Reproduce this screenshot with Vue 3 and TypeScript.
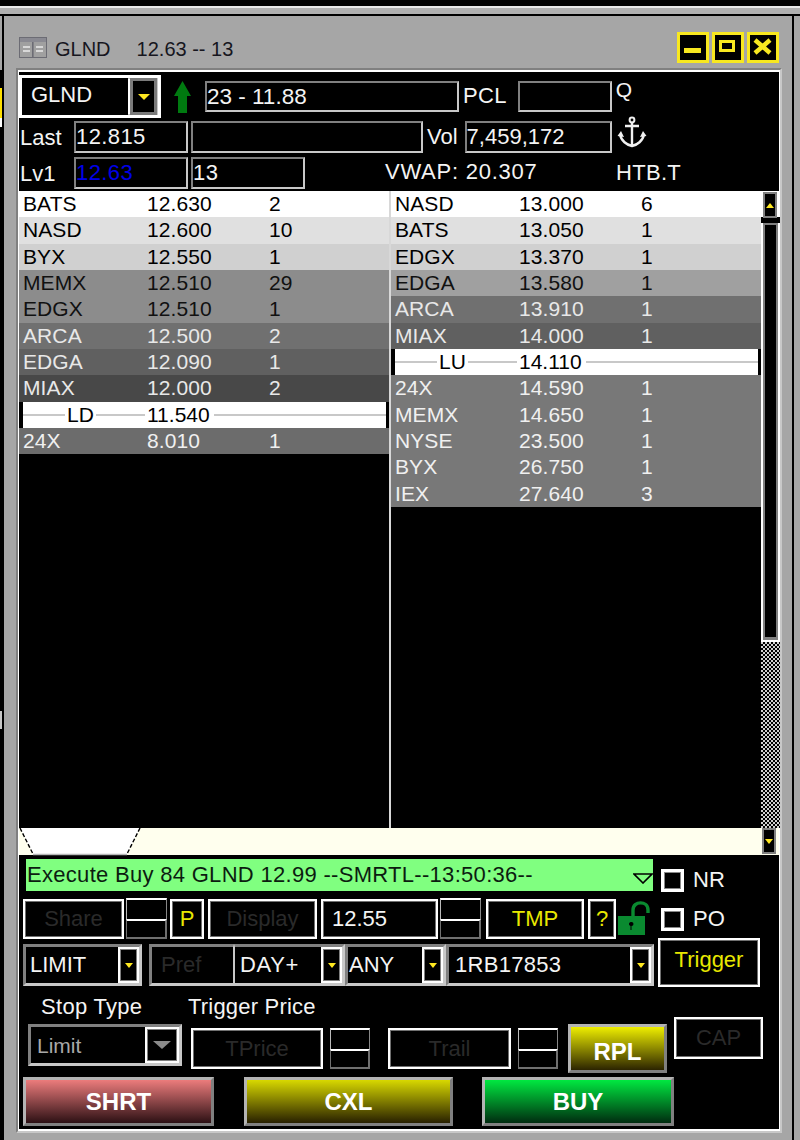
<script setup lang="ts">
interface Row { n?: string; p: string; s?: string; bg: string; fg: string; limit?: string }
const W = '#ffffff'
const leftRows: Row[] = [
  { n: 'BATS', p: '12.630', s: '2', bg: W, fg: '#000' },
  { n: 'NASD', p: '12.600', s: '10', bg: '#e0e0e0', fg: '#000' },
  { n: 'BYX', p: '12.550', s: '1', bg: '#d0d0d0', fg: '#000' },
  { n: 'MEMX', p: '12.510', s: '29', bg: '#8c8c8c', fg: '#111' },
  { n: 'EDGX', p: '12.510', s: '1', bg: '#8c8c8c', fg: '#111' },
  { n: 'ARCA', p: '12.500', s: '2', bg: '#707070', fg: '#e8e8e8' },
  { n: 'EDGA', p: '12.090', s: '1', bg: '#606060', fg: '#e8e8e8' },
  { n: 'MIAX', p: '12.000', s: '2', bg: '#484848', fg: '#e8e8e8' },
  { limit: 'LD', p: '11.540', bg: W, fg: '#000' },
  { n: '24X', p: '8.010', s: '1', bg: '#6c6c6c', fg: '#f0f0f0' },
]
const rightRows: Row[] = [
  { n: 'NASD', p: '13.000', s: '6', bg: W, fg: '#000' },
  { n: 'BATS', p: '13.050', s: '1', bg: '#e0e0e0', fg: '#000' },
  { n: 'EDGX', p: '13.370', s: '1', bg: '#d0d0d0', fg: '#000' },
  { n: 'EDGA', p: '13.580', s: '1', bg: '#a0a0a0', fg: '#111' },
  { n: 'ARCA', p: '13.910', s: '1', bg: '#707070', fg: '#e8e8e8' },
  { n: 'MIAX', p: '14.000', s: '1', bg: '#606060', fg: '#e8e8e8' },
  { limit: 'LU', p: '14.110', bg: W, fg: '#000' },
  { n: '24X', p: '14.590', s: '1', bg: '#787878', fg: '#f0f0f0' },
  { n: 'MEMX', p: '14.650', s: '1', bg: '#787878', fg: '#f0f0f0' },
  { n: 'NYSE', p: '23.500', s: '1', bg: '#787878', fg: '#f0f0f0' },
  { n: 'BYX', p: '26.750', s: '1', bg: '#787878', fg: '#f0f0f0' },
  { n: 'IEX', p: '27.640', s: '3', bg: '#787878', fg: '#f0f0f0' },
]
const books = [leftRows, rightRows]
</script>

<template>
  <div class="screen">
    <div class="top-black"></div>
    <div class="top-white"></div>
    <div class="top-gray"></div>
    <div class="frame">
      <div class="behind">
        <div class="seg-a"></div>
        <div class="seg-b"></div>
        <div class="seg-c"></div>
        <div class="seg-w"></div>
        <div class="seg-d"></div>
        <div class="seg-e"></div>
        <div class="seg-f"></div>
      </div>
      <div class="window">
        <div class="title">
          <svg class="winicon" width="28" height="21" viewBox="0 0 28 21">
            <rect x="0.5" y="0.5" width="27" height="20" fill="#a0a0a0" stroke="#6c6c74" />
            <rect x="1" y="1" width="26" height="4" fill="#8a8a92" />
            <rect x="13" y="5" width="1.6" height="15" fill="#6c6c74" />
            <rect x="4" y="9" width="7" height="2" fill="#d8d8d8" />
            <rect x="4" y="13" width="7" height="2" fill="#d8d8d8" />
            <rect x="17" y="9" width="7" height="2" fill="#d8d8d8" />
            <rect x="17" y="13" width="7" height="2" fill="#d8d8d8" />
          </svg>
          <span class="t-sym">GLND</span>
          <span class="t-quote">12.63 -- 13</span>
          <div class="winbtns">
            <div class="winbtn"><svg width="26" height="25" viewBox="0 0 26 25"><rect x="4" y="13" width="17" height="5" fill="#f8e820" /></svg></div>
            <div class="winbtn"><svg width="26" height="25" viewBox="0 0 26 25"><rect x="5.5" y="6.5" width="13" height="9" fill="none" stroke="#f8e820" stroke-width="3" /></svg></div>
            <div class="winbtn"><svg width="26" height="25" viewBox="0 0 26 25"><path d="M5 5 L20 18 M20 5 L5 18" stroke="#f8e820" stroke-width="4.5" fill="none" /></svg></div>
          </div>
        </div>

        <div class="panel">
          <div class="inner">
            <div class="head">
              <div class="h-row r1">
                <div class="sym-combo">
                  <div class="sym-input">GLND</div>
                  <div class="dd"><i class="tri"></i></div>
                </div>
                <svg class="up" width="17" height="32" viewBox="0 0 17 32"><path d="M8.5 0 L17 15 L13 15 L13 32 L4 32 L4 15 L0 15 Z" fill="#007a10" /></svg>
                <div class="box b-range">23 - 11.88</div>
                <span class="lbl l-pcl">PCL</span>
                <div class="box b-pcl"></div>
                <span class="lbl l-q">Q</span>
              </div>
              <div class="h-row r2">
                <span class="lbl l-side">Last</span>
                <div class="box b-a">12.815</div>
                <div class="box b-wide"></div>
                <span class="lbl l-vol">Vol</span>
                <div class="box b-vol">7,459,172</div>
                <svg class="anchor" width="30" height="32" viewBox="0 0 30 32">
                  <circle cx="15" cy="4" r="2.4" fill="none" stroke="#f0f0f0" stroke-width="2" />
                  <path d="M15 6 V30 M8 10 H22 M3 18 C4 25 10 29 15 30 C20 29 26 25 27 18" fill="none" stroke="#f0f0f0" stroke-width="2.4" />
                  <path d="M0.5 20 L4 15 L7 21 Z M29.5 20 L26 15 L23 21 Z" fill="#f0f0f0" />
                </svg>
              </div>
              <div class="h-row r3">
                <span class="lbl l-side">Lv1</span>
                <div class="box b-a blue">12.63</div>
                <div class="box b-b">13</div>
                <span class="lbl l-vwap">VWAP: 20.307</span>
                <span class="lbl l-htb">HTB.T</span>
              </div>
            </div>

            <div class="book">
              <template v-for="(rows, side) in books" :key="side">
                <div class="bookcol" :class="side === 0 ? 'col-l' : 'col-r'">
                  <template v-for="r in rows" :key="r.p">
                    <div v-if="r.limit" class="limitrow">
                      <i class="ln ln1"></i>
                      <span class="lim-n">{{ r.limit }}</span>
                      <i class="ln ln2"></i>
                      <span class="lim-p">{{ r.p }}</span>
                      <i class="ln ln3"></i>
                    </div>
                    <div v-else class="row" :style="{ background: r.bg, color: r.fg }">
                      <span class="c-n">{{ r.n }}</span>
                      <span class="c-p">{{ r.p }}</span>
                      <span class="c-s">{{ r.s }}</span>
                    </div>
                  </template>
                </div>
                <div v-if="side === 0" class="divider"></div>
              </template>
              <div class="vscroll">
                <div class="vs-top"><div class="sbtn"><i class="tri up-tri"></i></div></div>
                <div class="vs-thumb"><div class="thumb-in"></div></div>
                <div class="vs-hatch"></div>
              </div>
            </div>

            <div class="hscroll">
              <svg class="htab" width="122" height="30" viewBox="0 0 122 30">
                <path d="M1 2 L14 28 H108 L121 2 Z" fill="#ffffff" />
                <path d="M1 2 L14 28 M121 2 L108 28" stroke="#000" stroke-width="1.4" stroke-dasharray="4 2" fill="none" />
                <path d="M14 28.5 H108" stroke="#b8b8b8" stroke-width="1.5" />
              </svg>
              <div class="sbtn s-down"><i class="tri tiny"></i></div>
            </div>

            <div class="bottom">
              <div class="blk1">
                <div class="blk1-l">
                  <div class="banner">
                    <span>Execute Buy 84 GLND 12.99 --SMRTL--13:50:36--</span>
                    <svg width="20" height="11" viewBox="0 0 20 11"><path d="M1 1 H19 L10 10 Z" fill="none" stroke="#000" stroke-width="1.6" /></svg>
                  </div>
                  <div class="rowa">
                    <div class="btn dis w-share">Share</div>
                    <div class="spin"><div class="sp-u"></div><div class="sp-d"></div></div>
                    <div class="btn yel w-p">P</div>
                    <div class="btn dis w-disp">Display</div>
                    <div class="btn val w-price">12.55</div>
                    <div class="spin"><div class="sp-u"></div><div class="sp-d"></div></div>
                    <div class="btn yel w-tmp">TMP</div>
                    <div class="btn yel w-q">?</div>
                    <svg class="lock" width="34" height="34" viewBox="0 0 34 34">
                      <path d="M16 16 V9 C16 -0.5 31 -0.5 31 9 V12" fill="none" stroke="#0a8a30" stroke-width="3.4" />
                      <rect x="1" y="15" width="27" height="19" fill="#0a8a30" />
                      <path d="M14.5 21 a2 2 0 0 1 0 4 v4 h-1 v-4 a2 2 0 0 1 1 -4 Z" fill="#000" />
                    </svg>
                  </div>
                  <div class="rowb">
                    <div class="combo w-limit"><span>LIMIT</span><div class="dd small"><i class="tri"></i></div></div>
                    <div class="combo w-pref"><span class="dimtxt">Pref</span></div>
                    <div class="combo w-day"><span>DAY+</span><div class="dd small"><i class="tri"></i></div></div>
                    <div class="combo w-any"><span>ANY</span><div class="dd small"><i class="tri"></i></div></div>
                    <div class="combo w-acct"><span>1RB17853</span><div class="dd small"><i class="tri"></i></div></div>
                  </div>
                </div>
                <div class="blk1-r">
                  <div class="chk c1"><i class="cb"></i><span>NR</span></div>
                  <div class="chk c2"><i class="cb"></i><span>PO</span></div>
                  <div class="btn yel trig">Trigger</div>
                </div>
              </div>

              <div class="blk2">
                <div class="blk2-l">
                  <div class="labels"><span class="l1">Stop Type</span><span class="l2">Trigger Price</span></div>
                  <div class="ctrls">
                    <div class="combo w-stop"><span class="stoptxt">Limit</span><div class="dd grey"><i class="tri graytri"></i></div></div>
                    <div class="btn dis w-tp">TPrice</div>
                    <div class="spin sp2"><div class="sp-u"></div><div class="sp-d"></div></div>
                    <div class="btn dis w-trail">Trail</div>
                    <div class="spin sp3"><div class="sp-u"></div><div class="sp-d"></div></div>
                    <div class="act rpl">RPL</div>
                  </div>
                </div>
                <div class="btn dis cap">CAP</div>
              </div>

              <div class="blk3">
                <div class="act shrt">SHRT</div>
                <div class="act cxl">CXL</div>
                <div class="act buy">BUY</div>
              </div>
            </div>
          </div>
        </div>
      </div>
    </div>
  </div>
</template>

<style>
html, body { margin: 0; padding: 0; background: #a6a6a6; }
</style>

<style scoped>
* { box-sizing: border-box; }
.screen {
  width: 800px; height: 1140px; overflow: hidden; background: #a6a6a6;
  display: flex; flex-direction: column;
  font-family: "Liberation Sans", Arial, sans-serif; font-size: 22px; color: #f4f4f4;
}
.top-black { height: 6px; background: #000; flex: none; }
.top-white { height: 2px; background: #e8e8e8; flex: none; }
.top-gray { height: 6px; background: #b0b0b0; flex: none; }
.frame { flex: 1; display: flex; border-top: 2px solid #000; min-height: 0; }
.behind { width: 4px; flex: none; display: flex; flex-direction: column; background: #000; }
.seg-a { height: 54px; background: linear-gradient(90deg, #a6a6a6 0 2px, #000 2px); flex: none; }
.seg-b { height: 18px; flex: none; }
.seg-c { height: 30px; background: linear-gradient(90deg, #ffe000 0 2px, #000 2px); flex: none; }
.seg-w { height: 9px; background: linear-gradient(90deg, #fff 0 2px, #000 2px); flex: none; }
.seg-d { height: 584px; flex: none; }
.seg-e { height: 18px; background: linear-gradient(90deg, #c8c8c8 0 2px, #000 2px); flex: none; }
.seg-f { flex: 1; }
.window { width: 790px; flex: none; border-right: 2px solid #000; padding-left: 12px; }
.title { height: 52px; display: flex; align-items: flex-start; color: #16161e; font-size: 20px; }
.winicon { margin: 21px 0 0 3px; flex: none; }
.t-sym { margin: 22px 0 0 8px; line-height: 22px; }
.t-quote { margin: 22px 0 0 26px; line-height: 22px; }
.winbtns { margin: 16px 13px 0 auto; display: flex; gap: 3px; }
.winbtn { width: 32px; height: 31px; border: 3px solid #f8e820; background: #000; }
.winbtn svg { display: block; }
.panel {
  width: 766px; height: 1065px;
  border: 2px solid; border-color: #808080 #c8c8c8 #c8c8c8 #808080;
}
.inner {
  height: 100%; background: #000; border: solid #fff; border-width: 2px 1px 2px 1px;
  display: flex; flex-direction: column;
}
.head { height: 119px; flex: none; display: flex; flex-direction: column; }
.h-row { display: flex; align-items: flex-start; flex: none; }
.r1 { height: 48px; }
.r2 { height: 36px; }
.r3 { height: 35px; }
.lbl { line-height: 26px; white-space: nowrap; }
.box {
  flex: none; background: #000; border: 2px solid; border-color: #808080 #c8c8c8 #c8c8c8 #808080;
  line-height: 26px; padding-left: 0; letter-spacing: 0.4px; white-space: nowrap;
}
.sym-combo {
  width: 142px; height: 43px; margin-top: 3px; display: flex; flex: none;
  border: 3px solid #fff; background: #fff; box-shadow: inset 0 0 0 1px #c8c8c8;
}
.sym-input { width: 106px; height: 100%; background: #000; padding-left: 9px; line-height: 34px; font-size: 22px; }
.dd {
  width: 27px; margin-left: 2px; height: 100%; background: #000; flex: none;
  border: 3px solid #7a7a7a; display: flex; align-items: center; justify-content: center;
}
.tri { display: block; width: 0; height: 0; border: 6px solid transparent; border-top: 6px solid #ffe820; border-bottom: 0; }
.up-tri { border-top: 0; border-bottom: 5px solid #ffe820; border-left-width: 4px; border-right-width: 4px; }
.tiny { border-left-width: 4px; border-right-width: 4px; border-top-width: 5px; }
.up { margin: 9px 0 0 13px; flex: none; }
.b-range { width: 254px; height: 31px; margin: 9px 0 0 14px; font-size: 22.5px; letter-spacing: 0; line-height: 27px; }
.l-pcl { margin: 11px 0 0 4px; letter-spacing: 0.3px; }
.b-pcl { width: 94px; height: 31px; margin: 9px 0 0 11px; }
.l-q { margin: 7px 0 0 4px; line-height: 22px; font-size: 21px; }
.l-side { width: 55px; padding-left: 1px; margin-top: 5px; }
.b-a { width: 114px; height: 32px; margin-top: 1px; line-height: 28px; }
.blue { color: #0000e8; }
.b-wide { width: 232px; height: 32px; margin: 1px 0 0 3px; }
.l-vol { margin: 4px 0 0 4px; }
.b-vol { width: 147px; height: 32px; margin: 1px 0 0 7px; line-height: 28px; letter-spacing: 0; }
.anchor { margin: -4px 0 0 5px; flex: none; }
.b-b { width: 114px; height: 32px; margin: 1px 0 0 3px; line-height: 28px; }
.l-vwap { margin: 3px 0 0 80px; width: 231px; letter-spacing: 0.75px; }
.l-htb { margin: 4px 0 0 0; letter-spacing: 0.3px; }

.book { height: 637px; flex: none; display: flex; font-size: 21px; }
.bookcol { flex: none; background: #000; }
.col-l { width: 370px; }
.col-r { width: 370px; }
.divider { width: 2px; background: #d8d8d8; flex: none; }
.row { height: 26.33px; display: flex; line-height: 26px; padding-left: 4px; letter-spacing: 0.1px; }
.c-n { width: 124px; }
.c-p { width: 122px; }
.limitrow {
  height: 26.33px; margin: 0 3px 0 4px; background: #fff; color: #000; display: flex; align-items: center; line-height: 26px;
}
.ln { height: 2px; background: #c8c8c8; display: block; flex: none; }
.ln1 { width: 42px; }
.lim-n { width: 31px; text-align: center; }
.ln2 { width: 49px; }
.lim-p { width: 69px; padding-left: 2px; }
.ln3 { flex: 1; }
.vscroll { width: 19px; flex: none; display: flex; flex-direction: column; background: #000; }
.vs-top { height: 26.33px; background: #fff; flex: none; margin-bottom: 5.67px; }
.sbtn {
  width: 14px; height: 26px; background: #000; border: 2px solid #808080;
  display: flex; align-items: center; justify-content: center; margin-left: 2px; position: relative; top: 1px;
}
.vs-thumb { height: 419px; flex: none; border: 2px solid #fff; border-top: 0; }
.thumb-in { height: 100%; background: #000; border: 2px solid #808080; border-bottom-width: 3px; }
.vs-hatch { flex: 1; background: repeating-conic-gradient(#000 0 25%, #d0d0d0 0 50%) 0 0 / 4px 4px; }
.hscroll { height: 27px; flex: none; background: #ffffee; position: relative; display: flex; justify-content: flex-end; }
.htab { position: absolute; left: 0; top: -2px; }
.s-down { position: static; margin: 0 3px 0 0; height: 26px; }
.bottom { flex: 1; background: #000; display: flex; flex-direction: column; min-height: 0; }
.blk1 { height: 133px; flex: none; display: flex; }
.blk1-l { width: 635px; margin-left: 4px; flex: none; }
.banner {
  margin: 4px 0 0 3px; width: 627px; height: 32px; background: #80ff80; color: #0c1c10;
  display: flex; align-items: center; justify-content: space-between; line-height: 30px; font-size: 22px; letter-spacing: 0.3px; padding-left: 1px;
}
.banner svg { margin-top: 6px; flex: none; }
.rowa { display: flex; height: 41px; margin-top: 7px; align-items: flex-start; }
.btn {
  flex: none; height: 40px; margin-top: 1px; border: 2px solid #fff; box-shadow: 0 0 0 1px #707070 inset;
  background: #000; text-align: center; line-height: 35px;
}
.dis { color: #2a2a2a; }
.yel { color: #e8e800; }
.val { color: #f4f4f4; text-align: left; padding-left: 9px; }
.w-share { width: 101px; }
.spin { width: 41px; height: 41px; flex: none; margin-left: 2px; display: flex; flex-direction: column; }
.sp-u { height: 21px; border-top: 2px solid #fff; border-left: 1px solid #bbb; border-right: 1px solid #888; }
.sp-d { flex: 1; border-top: 2px solid #fff; border-bottom: 2px solid #707070; border-left: 1px solid #707070; border-right: 2px solid #707070; }
.w-p { width: 34px; margin-left: 3px; }
.w-disp { width: 109px; margin-left: 4px; }
.w-price { width: 117px; margin-left: 4px; }
.w-tmp { width: 98px; margin-left: 5px; }
.w-q { width: 28px; margin-left: 4px; }
.lock { margin: 3px 0 0 1px; flex: none; }
.rowb { display: flex; height: 42px; margin-top: 5px; }
.combo {
  flex: none; height: 42px; display: flex; align-items: stretch; justify-content: space-between;
  border: 3px solid; border-color: #808080 #c8c8c8 #c8c8c8 #808080; background: #000; line-height: 36px;
}
.combo span { padding-left: 4px; white-space: nowrap; }
.dd.small {
  width: 21px; margin: 0; border: 2px solid #fff; box-shadow: inset 0 0 0 1px #808080;
}
.dd.small .tri { border-left-width: 4.5px; border-right-width: 4.5px; border-top-width: 5px; }
.w-limit { width: 119px; }
.w-pref { width: 85px; margin-left: 7px; border-right-width: 1px; }
.dimtxt { color: #2a2a2a; padding-left: 9px !important; }
.w-day { width: 111px; border-left-width: 1px; border-color: #c8c8c8; border-top-color: #808080; }
.w-day span { padding-left: 5px; letter-spacing: 0.6px; }
.w-any { width: 101px; }
.w-any span { padding-left: 1px; }
.w-acct { width: 208px; }
.w-acct span { padding-left: 6px; letter-spacing: 0.3px; }
.blk1-r { margin-left: -4px; flex: 1; display: flex; flex-direction: column; }
.chk { display: flex; align-items: center; padding-left: 7px; height: 24px; }
.c1 { margin-top: 13px; }
.c2 { margin-top: 15px; }
.cb { display: block; width: 23px; height: 23px; border: 3px solid #fff; box-shadow: 0 0 0 1px #888 inset; background: #000; flex: none; }
.chk span { margin-left: 9px; }
.trig { width: 102px; height: 49px; margin: 7px 0 0 4px; line-height: 40px; border-color: #fff; box-shadow: 0 0 0 1px #707070 inset; }
.blk2 { height: 85px; flex: none; display: flex; align-items: flex-start; }
.blk2-l { width: 648px; flex: none; }
.labels { height: 36px; display: flex; padding-left: 22px; line-height: 26px; padding-top: 6px; }
.l1 { width: 147px; letter-spacing: 0.3px; }
.l2 { letter-spacing: 0.2px; }
.ctrls { display: flex; height: 49px; align-items: flex-start; }
.w-stop { width: 154px; margin-left: 9px; }
.combo span.stoptxt { color: #a8a8a8; font-size: 21px; padding-left: 6px; line-height: 38px; }
.dd.grey { width: 34px; margin: 0; border: 2px solid #fff; box-shadow: inset 0 0 0 1px #808080; }
.graytri { border-top-color: #8a8a8a; border-left-width: 9px; border-right-width: 9px; border-top-width: 8px; }
.w-tp { width: 132px; margin: 4px 0 0 9px; height: 41px; line-height: 37px; }
.sp2 { margin: 4px 0 0 7px; width: 40px; }
.w-trail { width: 123px; margin: 4px 0 0 18px; height: 41px; line-height: 37px; }
.sp3 { margin: 4px 0 0 7px; width: 40px; }
.act {
  flex: none; border: 3px solid; border-color: #b4b4b4 #808080 #808080 #b4b4b4;
  color: #fff; font-weight: 700; text-align: center; font-size: 24px;
}
.rpl { width: 99px; height: 49px; margin-left: 10px; background: linear-gradient(#eeee00, #2c2400); line-height: 50px; }
.cap { width: 89px; height: 42px; margin: 29px 0 0 7px; line-height: 38px; }
.blk3 { display: flex; margin-top: 4px; height: 49px; flex: none; }
.shrt { width: 191px; margin-left: 4px; background: linear-gradient(#ec7c7c, #2c1014); line-height: 43px; }
.cxl { width: 209px; margin-left: 30px; background: linear-gradient(#d8d800, #282000); line-height: 43px; }
.buy { width: 192px; margin-left: 29px; background: linear-gradient(#00e840, #002c10); line-height: 43px; }
</style>
